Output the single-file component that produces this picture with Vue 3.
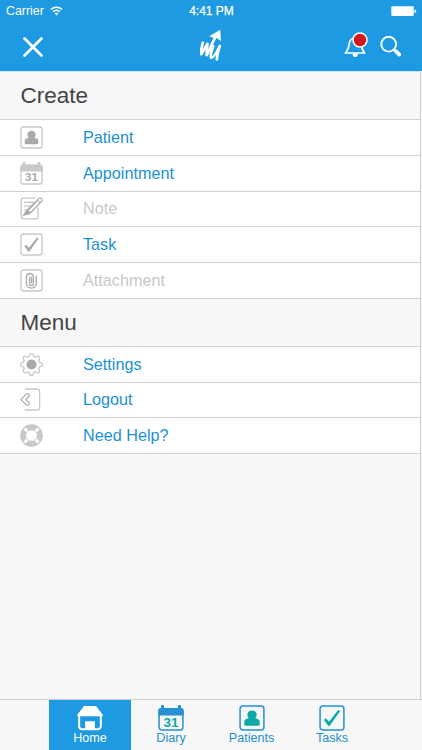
<script setup>
const groups = [
  {
    title: 'Create',
    rows: [
      { label: 'Patient', icon: 'patient' },
      { label: 'Appointment', icon: 'calendar' },
      { label: 'Note', icon: 'note', disabled: true },
      { label: 'Task', icon: 'task' },
      { label: 'Attachment', icon: 'clip', disabled: true },
    ],
  },
  {
    title: 'Menu',
    rows: [
      { label: 'Settings', icon: 'gear' },
      { label: 'Logout', icon: 'logout' },
      { label: 'Need Help?', icon: 'help' },
    ],
  },
]
const tabs = [
  { label: 'Home', icon: 'home', active: true },
  { label: 'Diary', icon: 'calendar' },
  { label: 'Patients', icon: 'patient' },
  { label: 'Tasks', icon: 'task' },
]
</script>

<template>
  <svg class="sprite" aria-hidden="true">
    <symbol id="patient" viewBox="0 0 24 24">
      <rect class="line" x="1" y="1" width="22" height="22" rx="2.5" />
      <path class="solid" d="M12 5c2.700 0 4.300 1.800 4.300 4 0 1.500-.6 2.500-1.400 3.300 2.800.4 4.200 1.500 4.200 3.400v2q0 1.400-1.400 1.400H6.300q-1.400 0-1.400-1.400v-2c0-1.900 1.400-3 4.200-3.400C8.300 11.500 7.700 10.500 7.700 9c0-2.200 1.600-4 4.300-4z" />
    </symbol>
    <symbol id="calendar" viewBox="0 0 24 24">
      <rect class="line" x="1" y="3.500" width="22" height="19.500" rx="2.500" />
      <path class="frame" d="M.3 9.800V5.200Q.3 2.700 2.800 2.700V1.200a1.400 1.400 0 0 1 2.800 0v1.500h12.800V1.200a1.400 1.400 0 0 1 2.800 0v1.500q2.500 0 2.500 2.500v4.600z" />
    </symbol>
    <symbol id="note" viewBox="0 0 24 24">
      <path class="line" d="M16 1.200H3.500A2.300 2.300 0 0 0 1.200 3.500v17a2.300 2.300 0 0 0 2.300 2.300h13a2.300 2.300 0 0 0 2.300-2.300V11M4 5.500h11M4 9.500h8M4 13.500h5" />
      <path class="white" d="M7 13 18.500 1.800Q20.500 0 22.400 1.700 24 3.600 22.300 5.600L11 17z" />
      <path class="mark thin" d="m7.500 13.500 12-11.800q1.500-1.100 2.900 0 1.200 1.500 0 3L10.700 16.700M18 3.200l3 3M16.500 5.500l-7.300 7.700" />
      <path class="solid" d="m7.500 12.800 4 3.700-2.500 1.700-6.400 1.500 3-4.700z" />
    </symbol>
    <symbol id="task" viewBox="0 0 24 24">
      <rect class="line" x="1" y="1" width="22" height="22" rx="2.500" />
      <path class="solid" d="M4.600 13.800 6.300 12.300 9.300 15.400 17.700 4.600 19.600 5.600 9.900 19.200H8.500z" />
    </symbol>
    <symbol id="clip" viewBox="0 0 24 24">
      <rect class="line" x="1" y="1" width="22" height="22" rx="2.500" />
      <path class="mark" d="M10 8.800v6.600a2 2 0 0 0 4 0V7.800a3.700 3.700 0 0 0-7.300 0v7.600a5.200 5.200 0 0 0 10.300 0V7.800M12 14.500V8.500" />
    </symbol>
    <symbol id="gear" viewBox="0 0 24 24">
      <path class="line" d="M9.700 3.500Q10.300.5 12 .5t2.300 3l2 .8q2.500-1.700 3.700-.5t-.4 3.800l.8 2q3.100.7 3.100 2.400t-3.100 2.400l-.8 2q1.600 2.600.4 3.800t-3.700-.5l-2 .8q-.6 3-2.300 3t-2.300-3l-2-.8q-2.500 1.700-3.700.5t.4-3.800l-.8-2Q.5 13.700.5 12t3.100-2.400l.8-2Q2.800 5 4 3.800t3.700.5z" />
      <circle class="solid" cx="12" cy="12" r="5.300" />
    </symbol>
    <symbol id="logout" viewBox="0 0 24 24">
      <path class="line" d="M5 1h13a2.500 2.500 0 0 1 2.500 2.500v17A2.500 2.500 0 0 1 18 23H5" />
      <path class="mark thin" d="M7 6.200.8 12.100l6.200 5.600q1.300.7 2.300-.3 1-1.300-.1-2.400L6 12.100l3.200-3.200q1-1.200 0-2.400-1-1-2.200-.3z" />
    </symbol>
    <symbol id="help" viewBox="0 0 24 24">
      <circle class="ring" cx="12" cy="12" r="8.700" />
      <path class="spokes" d="M7.700 7.700 4.700 4.700M16.300 7.700l3-3M16.300 16.300l3 3M7.700 16.300l-3 3" />
    </symbol>
    <symbol id="home" viewBox="0 0 24 24">
      <path class="solid" d="M6.500 1h11l6.200 8v1.300H.3V9z" />
      <path class="home-wall" d="M2 10v9.500A2.800 2.800 0 0 0 4.800 22.300h14.400a2.800 2.800 0 0 0 2.800-2.800V10" />
      <path class="solid" d="M7.500 15h9v7.300h-9z" />
    </symbol>
  </svg>

  <div class="screen">
    <header class="top">
      <div class="status">
        <div class="carrier">
          <span>Carrier</span>
          <svg class="wifi" viewBox="0 0 13 10">
            <path d="M1 3.500a8 8 0 0 1 11 0M3.100 5.700a5 5 0 0 1 6.800 0" />
            <path class="dot" d="M4.500 7.200q2-1.500 4 0l-2 2.200z" />
          </svg>
        </div>
        <span class="clock">4:41 PM</span>
        <svg class="battery" viewBox="0 0 26 11">
          <rect x=".3" y=".3" width="22.400" height="9.700" rx="1" />
          <path d="M23.500 3.500q1.700.2 1.700 1.700t-1.700 1.700z" />
        </svg>
      </div>
      <div class="nav">
        <svg class="close" viewBox="0 0 20 20"><path d="m1.500 1.500 17 17m0-17-17 17" /></svg>
        <svg class="logo" viewBox="0 0 26 34">
          <path d="M2.800 12.700Q.8 19 1.300 24.200L7.400 14 6.600 25.200Q10 20.500 11.200 15.500L16 6" />
          <path d="M13.300 16.200Q9.700 25.500 11.200 27.800q2.600.5 8.600-11.800-2.400 6.500-3 13.300" />
          <path class="tip" d="M10 6 20 .2l.7 10.300-3.200-2-1.700-1.800-2.600.7z" />
        </svg>
        <div class="actions">
          <svg class="bell" viewBox="0 0 26 28">
            <path class="outline" d="M2.700 22h18.800l-2.300-4v-5q-.5-6-6.500-6t-6.500 6l-1 4.500z" />
            <path class="clapper" d="M9.500 22.500h5.400q0 3.600-2.700 3.600t-2.700-3.600z" />
            <circle class="alert" cx="17" cy="9" r="7" />
          </svg>
          <svg class="search" viewBox="0 0 22 22">
            <circle cx="8.700" cy="8.200" r="7.400" />
            <path d="m14 13.500 2 2" />
            <path class="handle" d="m15.700 15.200 3.600 3.400" />
          </svg>
        </div>
      </div>
    </header>

    <main class="content">
      <section v-for="group in groups" :key="group.title">
        <h2>{{ group.title }}</h2>
        <ul>
          <li v-for="row in group.rows" :key="row.label" :class="{ disabled: row.disabled }">
            <span class="icon">
              <svg><use :href="'#' + row.icon" /></svg>
              <b v-if="row.icon === 'calendar'">31</b>
            </span>
            <span>{{ row.label }}</span>
          </li>
        </ul>
      </section>
    </main>

    <nav class="tabs">
      <a v-for="tab in tabs" :key="tab.label" :class="{ active: tab.active }">
        <span class="icon">
          <svg><use :href="'#' + tab.icon" /></svg>
          <b v-if="tab.icon === 'calendar'">31</b>
        </span>
        <span class="label">{{ tab.label }}</span>
      </a>
    </nav>
  </div>
</template>

<style>
body {
  margin: 0;
}
</style>

<style scoped>
.sprite {
  position: absolute;
  width: 0;
  height: 0;
}
.screen {
  width: 422px;
  height: 750px;
  display: flex;
  flex-direction: column;
  overflow: hidden;
  background: #f7f7f7;
  font-family: "Liberation Sans", Arial, sans-serif;
}
.top {
  height: 71px;
  flex: none;
  background: #1d9ae1;
  color: #fff;
}
.status {
  height: 22px;
  display: grid;
  grid-template-columns: 1fr auto 1fr;
  align-items: center;
  padding: 0 5px 0 6px;
  font-size: 12.400px;
}
.carrier {
  display: flex;
  align-items: center;
  gap: 6px;
}
.wifi {
  width: 13px;
  height: 10px;
  fill: none;
  stroke: #fff;
  stroke-width: 1.500;
}
.wifi .dot {
  fill: #fff;
  stroke: none;
}
.clock {
  font-size: 12px;
  -webkit-text-stroke: 0.250px #fff;
}
.battery {
  width: 26px;
  height: 11px;
  justify-self: end;
  fill: #fff;
}
.nav {
  height: 49px;
  display: grid;
  grid-template-columns: 1fr auto 1fr;
  align-items: center;
  padding: 0 20px 0 23px;
}
.close {
  width: 20px;
  height: 20px;
  stroke: #fff;
  stroke-width: 2.700;
  stroke-linecap: round;
}
.logo {
  width: 26px;
  height: 34px;
  fill: none;
  stroke: #fff;
  stroke-width: 2.700;
  stroke-linecap: round;
  stroke-linejoin: round;
  overflow: visible;
}
.logo .tip {
  fill: #fff;
  stroke-width: 0.500;
}
.actions {
  display: flex;
  justify-content: flex-end;
  align-items: center;
  gap: 11px;
}
.bell {
  width: 26px;
  height: 28px;
  margin-bottom: 4px;
}
.outline {
  fill: none;
  stroke: #fff;
  stroke-width: 1.700;
}
.clapper {
  fill: #fff;
}
.alert {
  fill: #cf1820;
  stroke: #fff;
  stroke-width: 1.500;
}
.search {
  width: 22px;
  height: 22px;
  fill: none;
  stroke: #fff;
  stroke-width: 1.900;
}
.search .handle {
  stroke-width: 3.700;
  stroke-linecap: round;
}
.content {
  flex: 1;
  border-top: 1px solid #d5e4ed;
  border-right: 1px solid #d0d0d0;
  margin-right: 1px;
}
h2 {
  height: 47.400px;
  margin: 0;
  padding-left: 20.500px;
  color: #444;
  font-size: 22.500px;
  font-weight: 400;
  line-height: 48px;
}
ul {
  margin: 0;
  padding: 0;
  list-style: none;
  border-top: 1px solid #d2d2d2;
}
li {
  box-sizing: border-box;
  height: 35.650px;
  display: flex;
  align-items: center;
  gap: 40px;
  padding-left: 20px;
  border-bottom: 1px solid #d0d0d0;
  background: #fff;
  color: #1c91d5;
  font-size: 16.200px;
}
li.disabled {
  color: #c8c8c8;
}
.icon {
  position: relative;
  flex: none;
}
.icon svg {
  display: block;
  width: 100%;
  height: 100%;
  overflow: visible;
}
.icon b {
  position: absolute;
  left: 0;
  right: 0;
  bottom: 2px;
  color: var(--mark);
  font-size: 11.500px;
  line-height: 12px;
  text-align: center;
}
li .icon {
  --line: #c9c9c9;
  --mark: #aaa;
  width: 23px;
  height: 23px;
}
.line,
.mark,
.home-wall {
  fill: none;
  stroke: var(--line);
  stroke-width: 1.400;
  stroke-linejoin: round;
}
.mark {
  stroke: var(--mark);
  stroke-linecap: round;
}
.thin {
  stroke-width: 1.200;
}
.solid {
  fill: var(--mark);
}
.frame {
  fill: var(--line);
}
.white {
  fill: #fff;
}
.ring {
  fill: none;
  stroke: var(--line);
  stroke-width: 6.300;
}
.spokes {
  stroke: #fff;
  stroke-width: 3;
}
.home-wall {
  stroke-width: 1.800;
}
.tabs {
  height: 50px;
  flex: none;
  display: grid;
  grid-template-columns: 82px 80px 81px 80px;
  padding-left: 49px;
  border-top: 1px solid #cdcdcd;
}
.tabs a {
  display: flex;
  flex-direction: column;
  align-items: center;
  padding-top: 5px;
  color: #2690d2;
  font-size: 12.600px;
  line-height: 15px;
}
.tabs .icon {
  --line: #2590d3;
  --mark: #0da9a4;
  width: 26px;
  height: 26px;
}
.tabs .icon b {
  bottom: 1px;
  font-size: 13.500px;
  line-height: 14px;
}
.tabs .active {
  background: #1d9ae1;
  color: #fff;
}
.tabs .active .icon {
  --line: #fff;
  --mark: #fff;
}
</style>
